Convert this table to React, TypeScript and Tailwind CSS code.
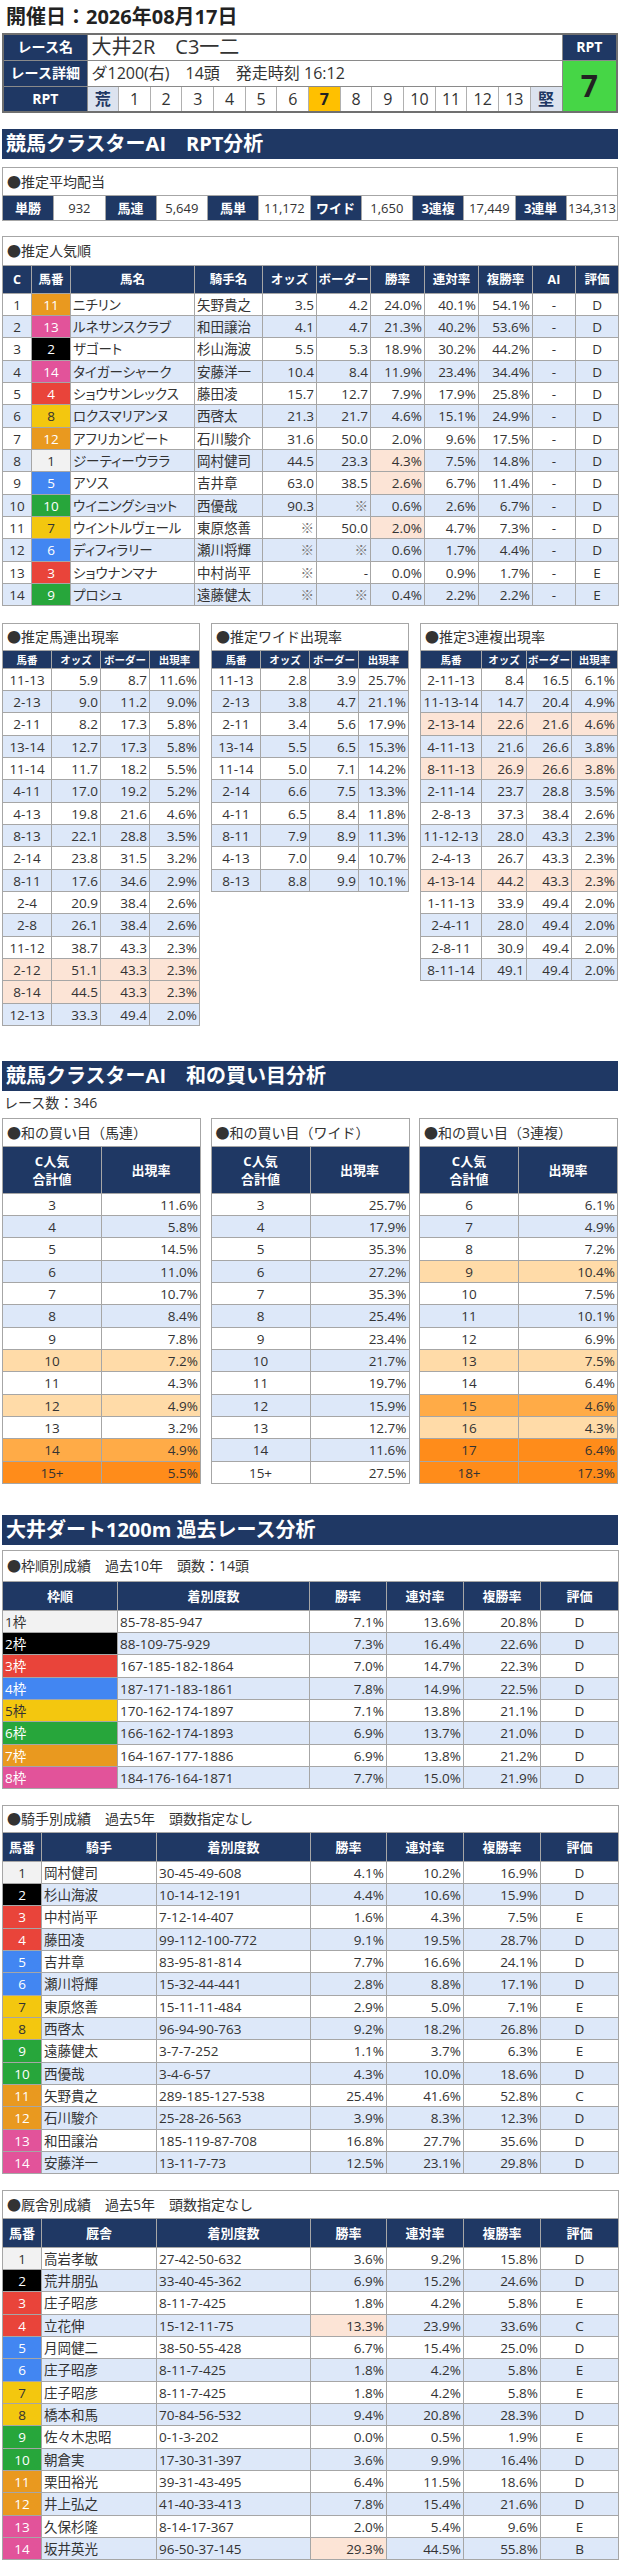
import React from "react";

const FONT = "font-['Open_Sans','Noto_Sans_CJK_JP',sans-serif]";
const CELL = "border border-[#a6a6a6] px-[2px] whitespace-nowrap overflow-hidden";
const TH = "border border-[#a6a6a6] bg-[#1f3864] text-white font-bold text-center whitespace-nowrap overflow-hidden";
const TITLE = "border border-[#a6a6a6] bg-white text-left pl-[4px] text-[14px] whitespace-nowrap";
const BLUE = "bg-[#dde8f9]";
const SALMON = "bg-[#fce4d6]";
const rowH = (i: number) => (i % 3 === 2 ? "h-[23px]" : "h-[22px]");

const FRAME: Record<number, string> = {
  1: "bg-[#f2f2f2] text-[#333]",
  2: "bg-black text-white",
  3: "bg-[#e9443a] text-white",
  4: "bg-[#4286f2] text-white",
  5: "bg-[#f3c70f] text-[#333]",
  6: "bg-[#27a63b] text-white",
  7: "bg-[#e9991f] text-white",
  8: "bg-[#e2539a] text-white",
};
const frameOf = (n: number) => (n <= 2 ? n : Math.ceil((n - 2) / 2) + 2);
const rowBg = (i: number) => (i % 2 === 1 ? BLUE : "bg-white");

function NavyBar({ children, className }: { children: React.ReactNode; className: string }) {
  return (
    <div className={`${className} h-[30px] bg-[#1f3864] text-white font-bold text-[20px] leading-[30px] pl-[4px] whitespace-nowrap`}>
      {children}
    </div>
  );
}

type PopRow = [number, number, string, string, string, string, string, string, string, string, boolean];
const POP: PopRow[] = [
  [1, 11, "ニチリン", "矢野貴之", "3.5", "4.2", "24.0%", "40.1%", "54.1%", "D", false],
  [2, 13, "ルネサンスクラブ", "和田譲治", "4.1", "4.7", "21.3%", "40.2%", "53.6%", "D", false],
  [3, 2, "ザゴート", "杉山海波", "5.5", "5.3", "18.9%", "30.2%", "44.2%", "D", false],
  [4, 14, "タイガーシャーク", "安藤洋一", "10.4", "8.4", "11.9%", "23.4%", "34.4%", "D", false],
  [5, 4, "ショウサンレックス", "藤田凌", "15.7", "12.7", "7.9%", "17.9%", "25.8%", "D", false],
  [6, 8, "ロクスマリアンヌ", "西啓太", "21.3", "21.7", "4.6%", "15.1%", "24.9%", "D", false],
  [7, 12, "アフリカンビート", "石川駿介", "31.6", "50.0", "2.0%", "9.6%", "17.5%", "D", false],
  [8, 1, "ジーティーウララ", "岡村健司", "44.5", "23.3", "4.3%", "7.5%", "14.8%", "D", true],
  [9, 5, "アソス", "吉井章", "63.0", "38.5", "2.6%", "6.7%", "11.4%", "D", true],
  [10, 10, "ウイニングショット", "西優哉", "90.3", "※", "0.6%", "2.6%", "6.7%", "D", false],
  [11, 7, "ウイントルヴェール", "東原悠善", "※", "50.0", "2.0%", "4.7%", "7.3%", "D", true],
  [12, 6, "ディフィラリー", "瀬川将輝", "※", "※", "0.6%", "1.7%", "4.4%", "D", false],
  [13, 3, "ショウナンマナ", "中村尚平", "※", "-", "0.0%", "0.9%", "1.7%", "E", false],
  [14, 9, "プロシュ", "遠藤健太", "※", "※", "0.4%", "2.2%", "2.2%", "E", false],
];

const UMAREN: string[][] = [
  ["11-13", "5.9", "8.7", "11.6%"],
  ["2-13", "9.0", "11.2", "9.0%"],
  ["2-11", "8.2", "17.3", "5.8%"],
  ["13-14", "12.7", "17.3", "5.8%"],
  ["11-14", "11.7", "18.2", "5.5%"],
  ["4-11", "17.0", "19.2", "5.2%"],
  ["4-13", "19.8", "21.6", "4.6%"],
  ["8-13", "22.1", "28.8", "3.5%"],
  ["2-14", "23.8", "31.5", "3.2%"],
  ["8-11", "17.6", "34.6", "2.9%"],
  ["2-4", "20.9", "38.4", "2.6%"],
  ["2-8", "26.1", "38.4", "2.6%"],
  ["11-12", "38.7", "43.3", "2.3%"],
  ["2-12", "51.1", "43.3", "2.3%"],
  ["8-14", "44.5", "43.3", "2.3%"],
  ["12-13", "33.3", "49.4", "2.0%"],
];
const WIDE: string[][] = [
  ["11-13", "2.8", "3.9", "25.7%"],
  ["2-13", "3.8", "4.7", "21.1%"],
  ["2-11", "3.4", "5.6", "17.9%"],
  ["13-14", "5.5", "6.5", "15.3%"],
  ["11-14", "5.0", "7.1", "14.2%"],
  ["2-14", "6.6", "7.5", "13.3%"],
  ["4-11", "6.5", "8.4", "11.8%"],
  ["8-11", "7.9", "8.9", "11.3%"],
  ["4-13", "7.0", "9.4", "10.7%"],
  ["8-13", "8.8", "9.9", "10.1%"],
];
const SANREN: string[][] = [
  ["2-11-13", "8.4", "16.5", "6.1%"],
  ["11-13-14", "14.7", "20.4", "4.9%"],
  ["2-13-14", "22.6", "21.6", "4.6%"],
  ["4-11-13", "21.6", "26.6", "3.8%"],
  ["8-11-13", "26.9", "26.6", "3.8%"],
  ["2-11-14", "23.7", "28.8", "3.5%"],
  ["2-8-13", "37.3", "38.4", "2.6%"],
  ["11-12-13", "28.0", "43.3", "2.3%"],
  ["2-4-13", "26.7", "43.3", "2.3%"],
  ["4-13-14", "44.2", "43.3", "2.3%"],
  ["1-11-13", "33.9", "49.4", "2.0%"],
  ["2-4-11", "28.0", "49.4", "2.0%"],
  ["2-8-11", "30.9", "49.4", "2.0%"],
  ["8-11-14", "49.1", "49.4", "2.0%"],
];

function SmallTable({ title, cols, rows, salmon }: { title: string; cols: string[]; rows: string[][]; salmon: number[] }) {
  return (
    <table className="w-[197px] table-fixed border-collapse text-[13.5px] leading-[18px]">
      <colgroup>
        {cols.map((c, i) => (
          <col key={i} className={c} />
        ))}
      </colgroup>
      <tbody>
        <tr className="h-[27px]">
          <td colSpan={4} className={TITLE}>{title}</td>
        </tr>
        <tr className="h-[18px] text-[10.5px] leading-[16px]">
          <td className={TH}>馬番</td>
          <td className={TH}>オッズ</td>
          <td className={TH}>ボーダー</td>
          <td className={TH}>出現率</td>
        </tr>
        {rows.map((r, i) => {
          const bg = salmon.includes(i) ? SALMON : rowBg(i);
          return (
            <tr key={i} className={rowH(i)}>
              <td className={`${CELL} ${bg} text-center`}>{r[0]}</td>
              <td className={`${CELL} ${bg} text-right`}>{r[1]}</td>
              <td className={`${CELL} ${bg} text-right`}>{r[2]}</td>
              <td className={`${CELL} ${bg} text-right`}>{r[3]}</td>
            </tr>
          );
        })}
      </tbody>
    </table>
  );
}

const SUMBG: Record<string, string> = {
  w: "bg-white",
  b: "bg-[#dde8f9]",
  l: "bg-[#ffdba8]",
  m: "bg-[#ffab47]",
  d: "bg-[#ff8c1a]",
};

const SUM1: [string, string, string][] = [
  ["3", "11.6%", "w"], ["4", "5.8%", "b"], ["5", "14.5%", "w"], ["6", "11.0%", "b"], ["7", "10.7%", "w"],
  ["8", "8.4%", "b"], ["9", "7.8%", "w"], ["10", "7.2%", "l"], ["11", "4.3%", "w"], ["12", "4.9%", "l"],
  ["13", "3.2%", "w"], ["14", "4.9%", "m"], ["15+", "5.5%", "d"],
];
const SUM2: [string, string, string][] = [
  ["3", "25.7%", "w"], ["4", "17.9%", "b"], ["5", "35.3%", "w"], ["6", "27.2%", "b"], ["7", "35.3%", "w"],
  ["8", "25.4%", "b"], ["9", "23.4%", "w"], ["10", "21.7%", "b"], ["11", "19.7%", "w"], ["12", "15.9%", "b"],
  ["13", "12.7%", "w"], ["14", "11.6%", "b"], ["15+", "27.5%", "w"],
];
const SUM3: [string, string, string][] = [
  ["6", "6.1%", "w"], ["7", "4.9%", "b"], ["8", "7.2%", "w"], ["9", "10.4%", "l"], ["10", "7.5%", "w"],
  ["11", "10.1%", "b"], ["12", "6.9%", "w"], ["13", "7.5%", "l"], ["14", "6.4%", "w"], ["15", "4.6%", "m"],
  ["16", "4.3%", "l"], ["17", "6.4%", "d"], ["18+", "17.3%", "d"],
];

function SumTable({ title, rows }: { title: string; rows: [string, string, string][] }) {
  return (
    <table className="w-[199px] table-fixed border-collapse text-[13.5px] leading-[18px]">
      <tbody>
        <tr className="h-[28px]">
          <td colSpan={2} className={TITLE}>{title}</td>
        </tr>
        <tr className="h-[47px] text-[13px] leading-[18px]">
          <td className={`${TH} w-1/2`}>
            C人気
            <br />
            合計値
          </td>
          <td className={`${TH} w-1/2`}>出現率</td>
        </tr>
        {rows.map((r, i) => (
          <tr key={i} className={rowH(i)}>
            <td className={`${CELL} ${SUMBG[r[2]]} text-center`}>{r[0]}</td>
            <td className={`${CELL} ${SUMBG[r[2]]} text-right`}>{r[1]}</td>
          </tr>
        ))}
      </tbody>
    </table>
  );
}

const WAKU: string[][] = [
  ["85-78-85-947", "7.1%", "13.6%", "20.8%", "D"],
  ["88-109-75-929", "7.3%", "16.4%", "22.6%", "D"],
  ["167-185-182-1864", "7.0%", "14.7%", "22.3%", "D"],
  ["187-171-183-1861", "7.8%", "14.9%", "22.5%", "D"],
  ["170-162-174-1897", "7.1%", "13.8%", "21.1%", "D"],
  ["166-162-174-1893", "6.9%", "13.7%", "21.0%", "D"],
  ["164-167-177-1886", "6.9%", "13.8%", "21.2%", "D"],
  ["184-176-164-1871", "7.7%", "15.0%", "21.9%", "D"],
];

type Perf = [string, string, string, string, string, string, boolean?];
const JOCKEY: Perf[] = [
  ["岡村健司", "30-45-49-608", "4.1%", "10.2%", "16.9%", "D"],
  ["杉山海波", "10-14-12-191", "4.4%", "10.6%", "15.9%", "D"],
  ["中村尚平", "7-12-14-407", "1.6%", "4.3%", "7.5%", "E"],
  ["藤田凌", "99-112-100-772", "9.1%", "19.5%", "28.7%", "D"],
  ["吉井章", "83-95-81-814", "7.7%", "16.6%", "24.1%", "D"],
  ["瀬川将輝", "15-32-44-441", "2.8%", "8.8%", "17.1%", "D"],
  ["東原悠善", "15-11-11-484", "2.9%", "5.0%", "7.1%", "E"],
  ["西啓太", "96-94-90-763", "9.2%", "18.2%", "26.8%", "D"],
  ["遠藤健太", "3-7-7-252", "1.1%", "3.7%", "6.3%", "E"],
  ["西優哉", "3-4-6-57", "4.3%", "10.0%", "18.6%", "D"],
  ["矢野貴之", "289-185-127-538", "25.4%", "41.6%", "52.8%", "C"],
  ["石川駿介", "25-28-26-563", "3.9%", "8.3%", "12.3%", "D"],
  ["和田譲治", "185-119-87-708", "16.8%", "27.7%", "35.6%", "D"],
  ["安藤洋一", "13-11-7-73", "12.5%", "23.1%", "29.8%", "D"],
];
const TRAINER: Perf[] = [
  ["高岩孝敏", "27-42-50-632", "3.6%", "9.2%", "15.8%", "D"],
  ["荒井朋弘", "33-40-45-362", "6.9%", "15.2%", "24.6%", "D"],
  ["庄子昭彦", "8-11-7-425", "1.8%", "4.2%", "5.8%", "E"],
  ["立花伸", "15-12-11-75", "13.3%", "23.9%", "33.6%", "C", true],
  ["月岡健二", "38-50-55-428", "6.7%", "15.4%", "25.0%", "D"],
  ["庄子昭彦", "8-11-7-425", "1.8%", "4.2%", "5.8%", "E"],
  ["庄子昭彦", "8-11-7-425", "1.8%", "4.2%", "5.8%", "E"],
  ["橋本和馬", "70-84-56-532", "9.4%", "20.8%", "28.3%", "D"],
  ["佐々木忠昭", "0-1-3-202", "0.0%", "0.5%", "1.9%", "E"],
  ["朝倉実", "17-30-31-397", "3.6%", "9.9%", "16.4%", "D"],
  ["栗田裕光", "39-31-43-495", "6.4%", "11.5%", "18.6%", "D"],
  ["井上弘之", "41-40-33-413", "7.8%", "15.4%", "21.6%", "D"],
  ["久保杉隆", "8-14-17-367", "2.0%", "5.4%", "9.6%", "E"],
  ["坂井英光", "96-50-37-145", "29.3%", "44.5%", "55.8%", "B", true],
];

function PerfTable({ title, head, rows, className, titleH }: { title: string; head: string; rows: Perf[]; className: string; titleH: string }) {
  return (
    <table className={`${className} w-full table-fixed border-collapse text-[13.5px] leading-[18px]`}>
      <colgroup>
        <col className="w-[39px]" />
        <col className="w-[115px]" />
        <col className="w-[154px]" />
        <col className="w-[76px]" />
        <col className="w-[77px]" />
        <col className="w-[77px]" />
        <col className="w-[78px]" />
      </colgroup>
      <tbody>
        <tr className={titleH}>
          <td colSpan={7} className={TITLE}>{title}</td>
        </tr>
        <tr className="h-[29px] text-[13px]">
          <td className={TH}>馬番</td>
          <td className={TH}>{head}</td>
          <td className={TH}>着別度数</td>
          <td className={TH}>勝率</td>
          <td className={TH}>連対率</td>
          <td className={TH}>複勝率</td>
          <td className={TH}>評価</td>
        </tr>
        {rows.map((r, i) => {
          const bg = rowBg(i);
          return (
            <tr key={i} className={rowH(i)}>
              <td className={`${CELL} ${FRAME[frameOf(i + 1)]} text-center`}>{i + 1}</td>
              <td className={`${CELL} ${bg}`}>{r[0]}</td>
              <td className={`${CELL} ${bg}`}>{r[1]}</td>
              <td className={`${CELL} ${r[6] ? SALMON : bg} text-right`}>{r[2]}</td>
              <td className={`${CELL} ${bg} text-right`}>{r[3]}</td>
              <td className={`${CELL} ${bg} text-right`}>{r[4]}</td>
              <td className={`${CELL} ${bg} text-center`}>{r[5]}</td>
            </tr>
          );
        })}
      </tbody>
    </table>
  );
}

const LBL = "border border-[#8a8a8a] bg-[#1f3864] text-white font-bold text-[14px] text-center whitespace-nowrap";
const SCALE = ["荒", "1", "2", "3", "4", "5", "6", "7", "8", "9", "10", "11", "12", "13", "堅"];

const PAY: [string, string][] = [
  ["単勝", "932"],
  ["馬連", "5,649"],
  ["馬単", "11,172"],
  ["ワイド", "1,650"],
  ["3連複", "17,449"],
  ["3連単", "134,313"],
];

export default function App() {
  return (
    <div className={`${FONT} w-[620px] bg-white text-[#333] px-[2px]`}>
      <div className="h-[33px] pt-[4px] pl-[4px] text-[20px] font-bold leading-[26px] text-[#222] whitespace-nowrap">
        開催日：2026年08月17日
      </div>

      <table className="w-full table-fixed border-collapse border-2 border-[#707070] leading-[20px]">
        <colgroup>
          <col className="w-[84px]" />
          {SCALE.map((_, i) => (
            <col key={i} />
          ))}
          <col className="w-[55px]" />
        </colgroup>
        <tbody>
          <tr className="h-[26px]">
            <td className={LBL}>レース名</td>
            <td colSpan={15} className="border border-[#8a8a8a] bg-white pl-[4px] text-[20px] leading-[24px] whitespace-nowrap">
              大井2R　C3一二
            </td>
            <td className={LBL}>RPT</td>
          </tr>
          <tr className="h-[26px]">
            <td className={LBL}>レース詳細</td>
            <td colSpan={15} className="border border-[#8a8a8a] bg-white pl-[4px] text-[16px] whitespace-nowrap">
              ダ1200(右)　14頭　発走時刻 16:12
            </td>
            <td rowSpan={2} className="border border-[#8a8a8a] bg-[#46d646] text-center text-[30px] font-bold text-[#222]">
              7
            </td>
          </tr>
          <tr className="h-[26px]">
            <td className={LBL}>RPT</td>
            {SCALE.map((s, i) => {
              const cls =
                s === "荒" || s === "堅"
                  ? "bg-[#dce3ef] text-[#1f3864] font-bold"
                  : s === "7"
                  ? "bg-[#ffc000] font-bold text-[#222]"
                  : "bg-white";
              return (
                <td key={i} className={`border border-[#b0b0b0] ${cls} text-center text-[16px] whitespace-nowrap`}>
                  {s}
                </td>
              );
            })}
          </tr>
        </tbody>
      </table>

      <NavyBar className="mt-[16px]">競馬クラスターAI　RPT分析</NavyBar>

      <table className="mt-[8px] w-full table-fixed border-collapse text-[14px] leading-[18px]">
        <tbody>
          <tr className="h-[28px]">
            <td colSpan={12} className={TITLE}>●推定平均配当</td>
          </tr>
          <tr className="h-[25px]">
            {PAY.map(([k, v]) => (
              <React.Fragment key={k}>
                <td className={`${TH} text-[13px]`}>{k}</td>
                <td className="border border-[#a6a6a6] bg-white text-center text-[13px] whitespace-nowrap px-0">{v}</td>
              </React.Fragment>
            ))}
          </tr>
        </tbody>
      </table>

      <table className="mt-[15px] w-full table-fixed border-collapse text-[13.5px] leading-[18px]">
        <colgroup>
          <col className="w-[29px]" />
          <col className="w-[39px]" />
          <col className="w-[124px]" />
          <col className="w-[68px]" />
          <col className="w-[54px]" />
          <col className="w-[54px]" />
          <col className="w-[54px]" />
          <col className="w-[54px]" />
          <col className="w-[54px]" />
          <col className="w-[43px]" />
          <col className="w-[43px]" />
        </colgroup>
        <tbody>
          <tr className="h-[29px]">
            <td colSpan={11} className={TITLE}>●推定人気順</td>
          </tr>
          <tr className="h-[28px] text-[12.5px]">
            {["C", "馬番", "馬名", "騎手名", "オッズ", "ボーダー", "勝率", "連対率", "複勝率", "AI", "評価"].map((h) => (
              <td key={h} className={TH}>{h}</td>
            ))}
          </tr>
          {POP.map((r, i) => {
            const bg = rowBg(i);
            return (
              <tr key={i} className={rowH(i)}>
                <td className={`${CELL} ${bg} text-center`}>{r[0]}</td>
                <td className={`${CELL} ${FRAME[frameOf(r[1])]} text-center`}>{r[1]}</td>
                <td className={`${CELL} ${bg} [font-feature-settings:'palt']`}>{r[2]}</td>
                <td className={`${CELL} ${bg}`}>{r[3]}</td>
                <td className={`${CELL} ${bg} text-right ${r[4] === "※" ? "text-[#777]" : ""}`}>{r[4]}</td>
                <td className={`${CELL} ${bg} text-right ${r[5] === "※" ? "text-[#777]" : ""}`}>{r[5]}</td>
                <td className={`${CELL} ${r[10] ? SALMON : bg} text-right`}>{r[6]}</td>
                <td className={`${CELL} ${bg} text-right`}>{r[7]}</td>
                <td className={`${CELL} ${bg} text-right`}>{r[8]}</td>
                <td className={`${CELL} ${bg} text-center`}>-</td>
                <td className={`${CELL} ${bg} text-center`}>{r[9]}</td>
              </tr>
            );
          })}
        </tbody>
      </table>

      <div className="mt-[17px] flex items-start justify-between">
        <SmallTable
          title="●推定馬連出現率"
          cols={["w-[49px]", "w-[49px]", "w-[49px]", "w-[50px]"]}
          rows={UMAREN}
          salmon={[13, 14]}
        />
        <SmallTable
          title="●推定ワイド出現率"
          cols={["w-[49px]", "w-[49px]", "w-[49px]", "w-[50px]"]}
          rows={WIDE}
          salmon={[]}
        />
        <SmallTable
          title="●推定3連複出現率"
          cols={["w-[61px]", "w-[45px]", "w-[45px]", "w-[46px]"]}
          rows={SANREN}
          salmon={[2, 4, 9]}
        />
      </div>

      <NavyBar className="mt-[35px]">競馬クラスターAI　和の買い目分析</NavyBar>
      <div className="h-[24px] pl-[2px] text-[14px] leading-[24px]">レース数：346</div>
      <div className="mt-[3px] flex items-start justify-between">
        <SumTable title="●和の買い目（馬連）" rows={SUM1} />
        <SumTable title="●和の買い目（ワイド）" rows={SUM2} />
        <SumTable title="●和の買い目（3連複）" rows={SUM3} />
      </div>

      <NavyBar className="mt-[31px]">大井ダート1200m 過去レース分析</NavyBar>

      <table className="mt-[5px] w-full table-fixed border-collapse text-[13.5px] leading-[18px]">
        <colgroup>
          <col className="w-[115px]" />
          <col className="w-[192px]" />
          <col className="w-[77px]" />
          <col className="w-[77px]" />
          <col className="w-[77px]" />
          <col className="w-[78px]" />
        </colgroup>
        <tbody>
          <tr className="h-[31px]">
            <td colSpan={6} className={TITLE}>●枠順別成績　過去10年　頭数：14頭</td>
          </tr>
          <tr className="h-[29px] text-[13px]">
            {["枠順", "着別度数", "勝率", "連対率", "複勝率", "評価"].map((h) => (
              <td key={h} className={TH}>{h}</td>
            ))}
          </tr>
          {WAKU.map((r, i) => {
            const bg = rowBg(i);
            return (
              <tr key={i} className={rowH(i)}>
                <td className={`${CELL} ${FRAME[i + 1]} text-left`}>{i + 1}枠</td>
                <td className={`${CELL} ${bg}`}>{r[0]}</td>
                <td className={`${CELL} ${bg} text-right`}>{r[1]}</td>
                <td className={`${CELL} ${bg} text-right`}>{r[2]}</td>
                <td className={`${CELL} ${bg} text-right`}>{r[3]}</td>
                <td className={`${CELL} ${bg} text-center`}>{r[4]}</td>
              </tr>
            );
          })}
        </tbody>
      </table>

      <PerfTable className="mt-[16px]" titleH="h-[27px]" title="●騎手別成績　過去5年　頭数指定なし" head="騎手" rows={JOCKEY} />
      <PerfTable className="mt-[16px]" titleH="h-[28px]" title="●厩舎別成績　過去5年　頭数指定なし" head="厩舎" rows={TRAINER} />
    </div>
  );
}
